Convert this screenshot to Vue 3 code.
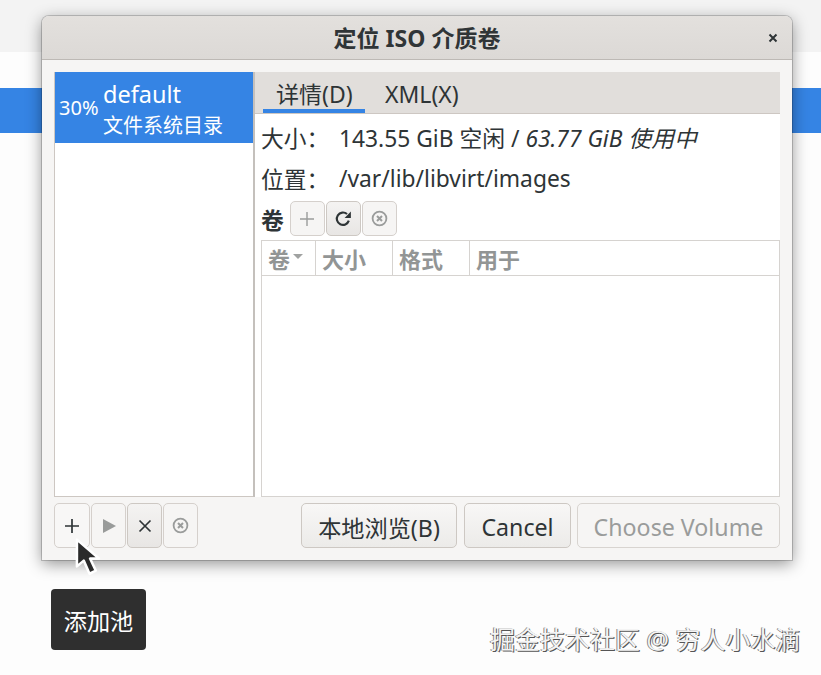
<script setup>
const columns = [
  { label: '卷', w: 54, arrow: true },
  { label: '大小', w: 77 },
  { label: '格式', w: 77 },
  { label: '用于', w: 0 },
]
</script>

<template>
  <div class="page">
    <div class="bg-top"></div>
    <div class="bg-band"></div>

    <section class="dialog">
      <header class="titlebar">
        <h1 class="title">定位 ISO 介质卷</h1>
        <svg class="close" width="10" height="10" viewBox="0 0 10 10"><path d="M1.5 1.5l7 7M8.500 1.500l-7 7" stroke="#2e3436" stroke-width="2" fill="none"/></svg>
      </header>

      <div class="body">
        <div class="main">
          <aside class="pools">
            <div class="pool selected">
              <span class="pct">30%</span>
              <div class="pool-text">
                <div class="pool-name">default</div>
                <div class="pool-type">文件系统目录</div>
              </div>
            </div>
          </aside>
          <div class="details">
            <nav class="tabs">
              <div class="tab active">详情(D)</div>
              <div class="tab">XML(X)</div>
            </nav>
            <div class="content">
              <div class="info"><span class="key">大小：</span><span>143.55 GiB 空闲 / <i>63.77 GiB 使用中</i></span></div>
              <div class="info second"><span class="key">位置：</span><span>/var/lib/libvirt/images</span></div>
              <div class="vol-head">
                <b class="vol-label">卷</b>
                <div class="tool-group">
                  <button class="tool disabled"><svg width="16" height="16" viewBox="0 0 16 16"><path d="M8 1v14M1 8h14" stroke="#9a9c9b" stroke-width="1.400" fill="none"/></svg></button>
                  <button class="tool raised"><svg width="18" height="18" viewBox="0 0 16 16"><path d="M13.200 9.500A5.500 5.500 0 1 1 11.600 3.600" stroke="#2e3436" stroke-width="1.900" fill="none"/><path d="M9.400 7h5.600V1.400z" fill="#2e3436"/></svg></button>
                  <button class="tool"><svg width="17" height="17" viewBox="0 0 17 17"><circle cx="8.500" cy="8.500" r="6.900" stroke="#9a9c9b" stroke-width="1.800" fill="none"/><path d="M6 6l5 5M11 6l-5 5" stroke="#9a9c9b" stroke-width="2" fill="none"/></svg></button>
                </div>
              </div>
              <div class="table">
                <div class="thead">
                  <div v-for="c in columns" :key="c.label" class="th" :class="{ grow: !c.w }" :style="c.w ? { width: c.w + 'px' } : null">
                    {{ c.label }}<svg v-if="c.arrow" class="sort" width="10" height="5" viewBox="0 0 10 5"><path d="M0 0h10L5 5z" fill="#a0a2a1"/></svg>
                  </div>
                </div>
              </div>
            </div>
          </div>
        </div>

        <footer class="actions">
          <div class="tool-group">
            <button class="tool hover"><svg width="18" height="18" viewBox="0 0 18 18"><path d="M9 2v14M2 9h14" stroke="#2e3436" stroke-width="1.700" fill="none"/></svg></button>
            <button class="tool"><svg width="14" height="16" viewBox="0 0 14 16"><path d="M1 1l13 7-13 7z" fill="#999b9a"/></svg></button>
            <button class="tool raised"><svg width="14" height="14" viewBox="0 0 14 14"><path d="M1.500 1.500l11 11M12.500 1.500l-11 11" stroke="#2e3436" stroke-width="1.700" fill="none"/></svg></button>
            <button class="tool"><svg width="17" height="17" viewBox="0 0 17 17"><circle cx="8.500" cy="8.500" r="6.900" stroke="#9a9c9b" stroke-width="1.800" fill="none"/><path d="M6 6l5 5M11 6l-5 5" stroke="#9a9c9b" stroke-width="2" fill="none"/></svg></button>
          </div>
          <div class="buttons">
            <button class="btn browse">本地浏览(B)</button>
            <button class="btn cancel">Cancel</button>
            <button class="btn choose" disabled>Choose Volume</button>
          </div>
        </footer>
      </div>
    </section>

    <div class="tooltip">添加池</div>
    <svg class="cursor" width="32" height="42" viewBox="0 0 30 40"><path d="M3.500 2.500L3.500 28l6.500-5.500 5.500 12.500 6-3-5.500-11.500h8.500z" fill="#2b2b2b" stroke="#fff" stroke-width="2.400" stroke-linejoin="round"/></svg>
    <div class="watermark">掘金技术社区 @ 穷人小水滴</div>
  </div>
</template>

<style scoped>
.page {
  position: relative;
  width: 821px;
  height: 675px;
  overflow: hidden;
  background: #fdfdfd;
  font-family: "Noto Sans", "Noto Sans CJK SC", sans-serif;
  color: #2e3436;
}
.bg-top { height: 52px; background: #f3f3f3; }
.bg-band { height: 45px; margin-top: 36px; background: #3584e4; }

.dialog {
  position: absolute;
  left: 42px;
  top: 16px;
  width: 750px;
  height: 544px;
  display: flex;
  flex-direction: column;
  border-radius: 7px 7px 0 0;
  background: #f6f5f4;
  box-shadow: 0 0 0 1px rgba(0, 0, 0, 0.18), 0 4px 16px rgba(0, 0, 0, 0.42);
}
.titlebar {
  position: relative;
  height: 44px;
  flex: none;
  display: flex;
  align-items: center;
  justify-content: center;
  padding-top: 2px;
  background: linear-gradient(#e3e0dd, #dcd9d6);
  border-bottom: 1px solid #bdb9b5;
  border-radius: 7px 7px 0 0;
  box-sizing: border-box;
}
.title { margin: 0; font-size: 23px; font-weight: 700; line-height: 1; color: #303537; }
.close { position: absolute; right: 14px; top: 17px; }

.body { flex: 1; display: flex; flex-direction: column; padding: 12px; min-height: 0; }
.main { flex: 1; display: flex; min-height: 0; }
.pools {
  width: 198px;
  flex: none;
  background: #fff;
  border: 1px solid #cdc7c2;
  border-top: 0;
  border-right: 0;
  box-sizing: content-box;
}
.pool.selected {
  height: 71px;
  display: flex;
  align-items: center;
  background: #3584e4;
  color: #fff;
}
.pct { width: 48px; padding-left: 4px; box-sizing: border-box; font-size: 20px; }
.pool-text { margin-top: 4px; }
.pool-name { font-size: 23.500px; line-height: 33px; }
.pool-type { font-size: 20px; line-height: 30px; }

.details {
  flex: 1;
  min-width: 0;
  display: flex;
  flex-direction: column;
  border-left: 2px solid #c4c0bc;
}
.tabs {
  height: 42px;
  flex: none;
  display: flex;
  padding-left: 8px;
  background: #e1dedb;
  box-sizing: border-box;
  border-bottom: 1px solid #cdc7c2;
}
.tab { font-size: 23px; line-height: 44px; padding: 0 14px; height: 41px; box-sizing: border-box; white-space: nowrap; }
.tab.active { width: 102px; padding: 0 0 0 13px; box-shadow: inset 0 -4px 0 #3584e4; margin-right: 6px; }
.content { flex: 1; min-height: 0; background: #fff; display: flex; flex-direction: column; padding-left: 6px; }
.info { display: flex; height: 40px; margin-top: 3px; align-items: center; font-size: 22.800px; white-space: nowrap; }
.info.second { margin-top: 0; height: 42px; }
.key { width: 78px; flex: none; }
.vol-head { height: 41px; padding-bottom: 2px; box-sizing: border-box; display: flex; align-items: center; gap: 6px; }
.vol-label { font-size: 22.800px; font-weight: 700; margin-top: 2px; }

.tool-group { display: flex; gap: 1px; }
.tool {
  width: 35px;
  height: 35px;
  padding: 0;
  display: flex;
  align-items: center;
  justify-content: center;
  background: #f6f5f4;
  border: 1px solid #d5d0cc;
  border-radius: 5px;
}
.tool.raised { background: linear-gradient(#f4f3f2, #e8e6e4); border-color: #cdc8c3; }
.tool.hover { background: #f8f7f6; width: 36px; }

.table { flex: 1; border: 1px solid #d6d3d0; background: #fff; min-height: 0; }
.thead { height: 35px; box-sizing: border-box; display: flex; border-bottom: 1px solid #d6d3d0; }
.th {
  box-sizing: border-box;
  height: 34px;
  display: flex;
  align-items: center;
  padding-left: 6px;
  padding-bottom: 1px;
  border-right: 1px solid #d6d3d0;
  font-size: 22px;
  font-weight: 700;
  color: #929595;
}
.th.grow { flex: 1; border-right: 0; }
.sort { margin-left: 3px; margin-bottom: 3px; }

.actions { height: 51px; flex: none; display: flex; align-items: flex-end; justify-content: space-between; }
.actions .tool { height: 45px; }
.buttons { display: flex; gap: 7px; }
.btn {
  height: 45px;
  padding: 3px 0 0;
  font: inherit;
  font-size: 23.200px;
  color: #2e3436;
  background: linear-gradient(#f8f7f6, #ecebe9);
  border: 1px solid #cdc8c3;
  border-radius: 5px;
}
.browse { width: 156px; }
.cancel { width: 107px; margin-right: -1px; }
.choose { width: 203px; background: #f6f5f4; color: #9a9c9b; border-color: #d8d4d0; }

.tooltip {
  position: absolute;
  left: 51px;
  top: 589px;
  width: 95px;
  height: 61px;
  display: flex;
  align-items: center;
  justify-content: center;
  border-radius: 4px;
  background: #2f2f2f;
  color: #fff;
  font-size: 23.200px;
}
.cursor { position: absolute; left: 73px; top: 537px; }
.watermark {
  position: absolute;
  left: 490px;
  top: 623px;
  font-size: 25px;
  line-height: 32px;
  white-space: nowrap;
  color: #f4f4f4;
  text-shadow: 1px 1px 0 #555, -1px 0 0 #888;
}
</style>

<style>
html, body { margin: 0; background: #fdfdfd; }
</style>
